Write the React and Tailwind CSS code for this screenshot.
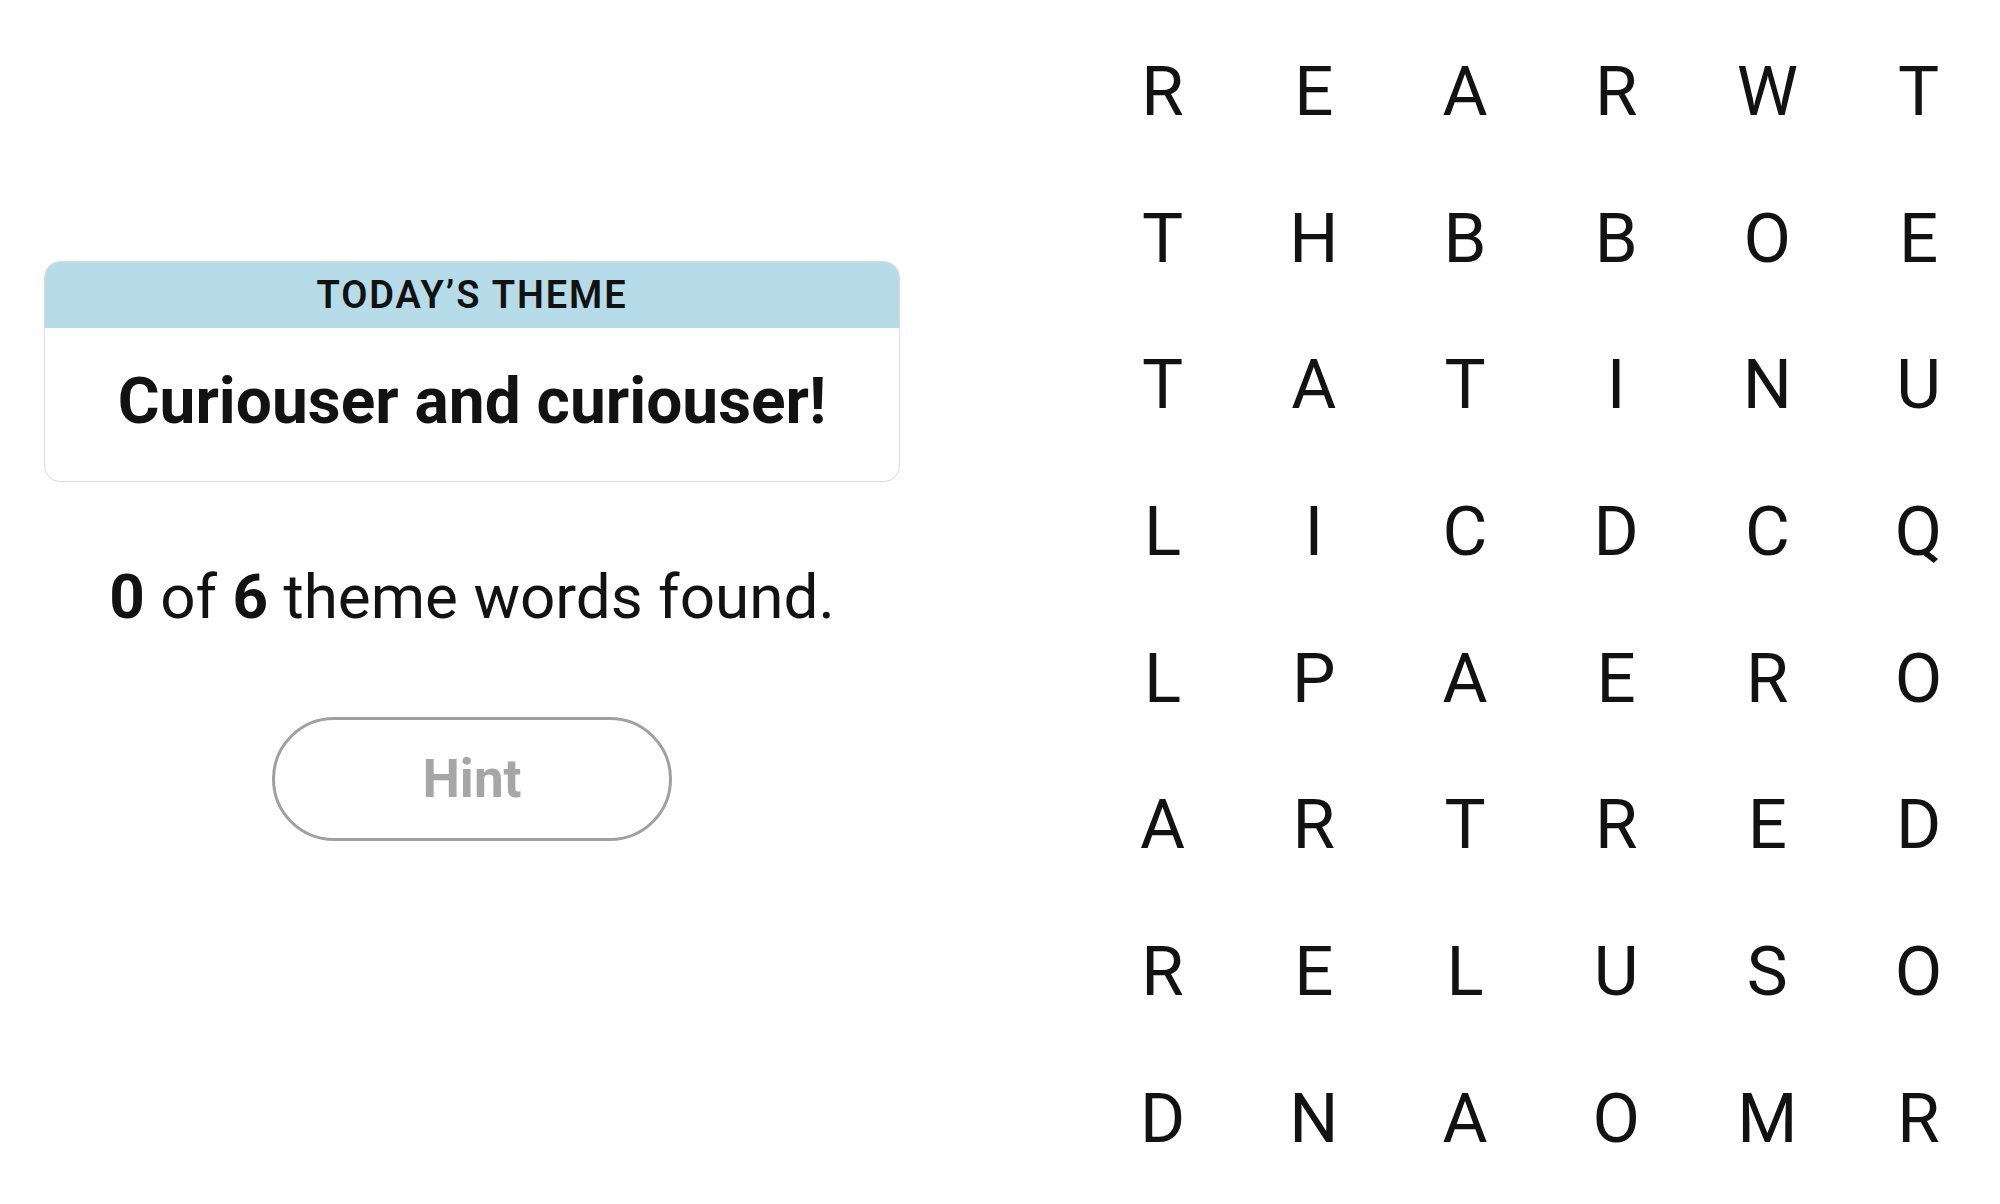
const GRID = [
  "REARWT",
  "THBBOE",
  "TATINU",
  "LICDCQ",
  "LPAERO",
  "ARTRED",
  "RELUSO",
  "DNAOMR",
];

function ThemeCard({ theme }) {
  return (
    <div className="w-[856px] overflow-hidden rounded-[16px] border border-[#dcdcdc]">
      <div className="flex h-[66px] items-center justify-center bg-[#b6dce9]">
        <span className="text-[38px] font-semibold uppercase leading-none tracking-[0.05em] text-[#121212]">
          Today’s Theme
        </span>
      </div>
      <div className="flex h-[153px] items-center justify-center pb-[6px]">
        <h1 className="text-[64px] font-bold leading-none text-[#121212]">
          {theme}
        </h1>
      </div>
    </div>
  );
}

function LetterGrid() {
  return (
    <div className="grid grid-cols-6">
      {GRID.map((row, r) =>
        row.split("").map((letter, c) => (
          <div
            key={`${r}-${c}`}
            className="flex h-[146.7px] w-[151.2px] items-center justify-center text-[69px] leading-none text-[#121212]"
          >
            {letter}
          </div>
        ))
      )}
    </div>
  );
}

export default function App() {
  return (
    <div className="flex h-[1204px] w-[2000px] bg-white font-[Roboto,sans-serif]">
      <div className="ml-[44px] flex w-[856px] flex-col items-center pt-[261px]">
        <ThemeCard theme="Curiouser and curiouser!" />

        <p className="mt-[84px] text-[62px] leading-none text-[#121212]">
          <span className="font-bold">0</span> of{" "}
          <span className="font-bold">6</span> theme words found.
        </p>

        <button className="mt-[89px] flex h-[124px] w-[400px] items-center justify-center rounded-full border-[3.5px] border-[#a0a0a0] bg-white text-[53px] font-bold leading-none text-[#a6a6a6]">
          Hint
        </button>
      </div>

      <div className="ml-[187px] pt-[18px]">
        <LetterGrid />
      </div>
    </div>
  );
}
